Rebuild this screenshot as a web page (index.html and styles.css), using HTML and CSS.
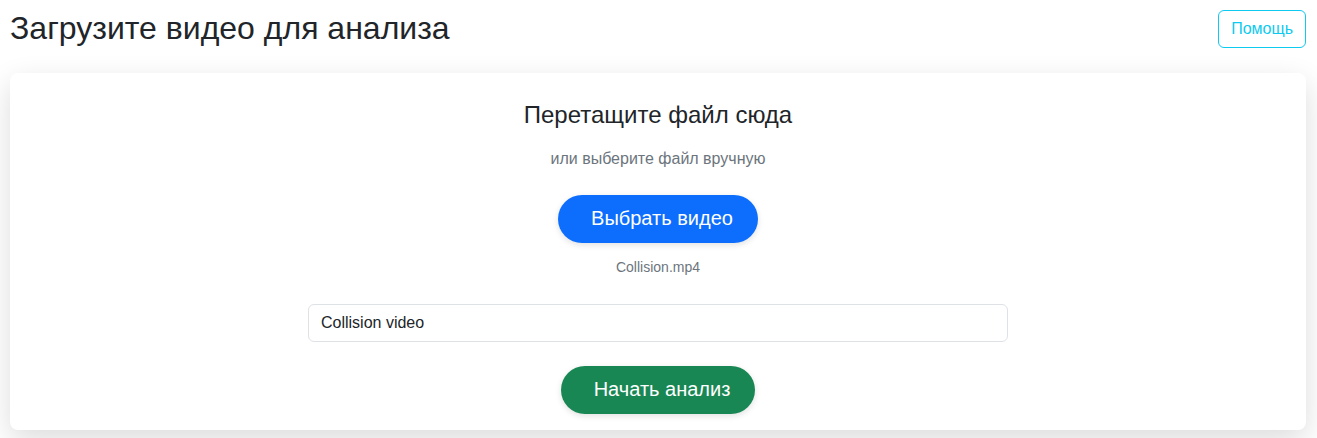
FILE: index.html
```html
<!DOCTYPE html>
<html lang="ru">
<head>
<meta charset="utf-8">
<title>Загрузка видео</title>
<link rel="stylesheet" href="styles.css">
</head>
<body>
<div class="page">
  <header class="header">
    <h1 class="title">Загрузите видео для анализа</h1>
    <button class="btn-help" type="button">Помощь</button>
  </header>
  <main class="card">
    <h4 class="drop-title">Перетащите файл сюда</h4>
    <p class="drop-sub">или выберите файл вручную</p>
    <button class="btn-pill btn-blue" type="button">Выбрать видео</button>
    <div class="file-name">Collision.mp4</div>
    <input class="name-input" type="text" value="Collision video">
    <button class="btn-pill btn-green" type="button">Начать анализ</button>
  </main>
</div>
</body>
</html>
```

FILE: styles.css
```css
* { box-sizing: border-box; }
html, body { margin: 0; padding: 0; }
body {
  font-family: "Liberation Sans", Arial, sans-serif;
  color: #212529;
  background: #fff;
  height: 438px;
  overflow: hidden;
}
.page {
  padding: 9px 11px 0 10px;
}
.header {
  display: flex;
  justify-content: space-between;
  align-items: flex-start;
}
.title {
  margin: 0;
  font-size: 32px;
  font-weight: 400;
  line-height: 1.2;
}
.btn-help {
  margin-top: 1px;
  height: 38px;
  padding: 0 12px;
  font-family: inherit;
  font-size: 16px;
  color: #0dcaf0;
  background: transparent;
  border: 1px solid #0dcaf0;
  border-radius: 6px;
}
.card {
  margin-top: 25px;
  background: #fff;
  border-radius: 8px;
  box-shadow: 0 10px 30px rgba(0,0,0,0.14);
  padding: 28px 16px 16px;
  display: flex;
  flex-direction: column;
  align-items: center;
}
.drop-title {
  margin: 0;
  font-size: 24px;
  font-weight: 400;
  line-height: 1.2;
}
.drop-sub {
  margin: 17px 0 0;
  font-size: 16px;
  line-height: 1.5;
  color: #6c757d;
}
.btn-pill {
  height: 48px;
  border: none;
  border-radius: 24px;
  padding: 0 0 0 8px;
  font-family: inherit;
  font-size: 20px;
  color: #fff;
  box-shadow: 0 2px 6px rgba(0,0,0,0.12);
}
.btn-blue {
  margin-top: 24px;
  width: 200px;
  background: #0d6efd;
}
.btn-green {
  margin-top: 24px;
  width: 194px;
  background: #198754;
}
.file-name {
  margin-top: 14px;
  font-size: 14px;
  line-height: 1.5;
  color: #6c757d;
}
.name-input {
  margin-top: 26px;
  width: 700px;
  height: 38px;
  padding: 0 12px;
  font-family: inherit;
  font-size: 16px;
  color: #212529;
  border: 1px solid #dee2e6;
  border-radius: 6px;
  outline: none;
}
```
